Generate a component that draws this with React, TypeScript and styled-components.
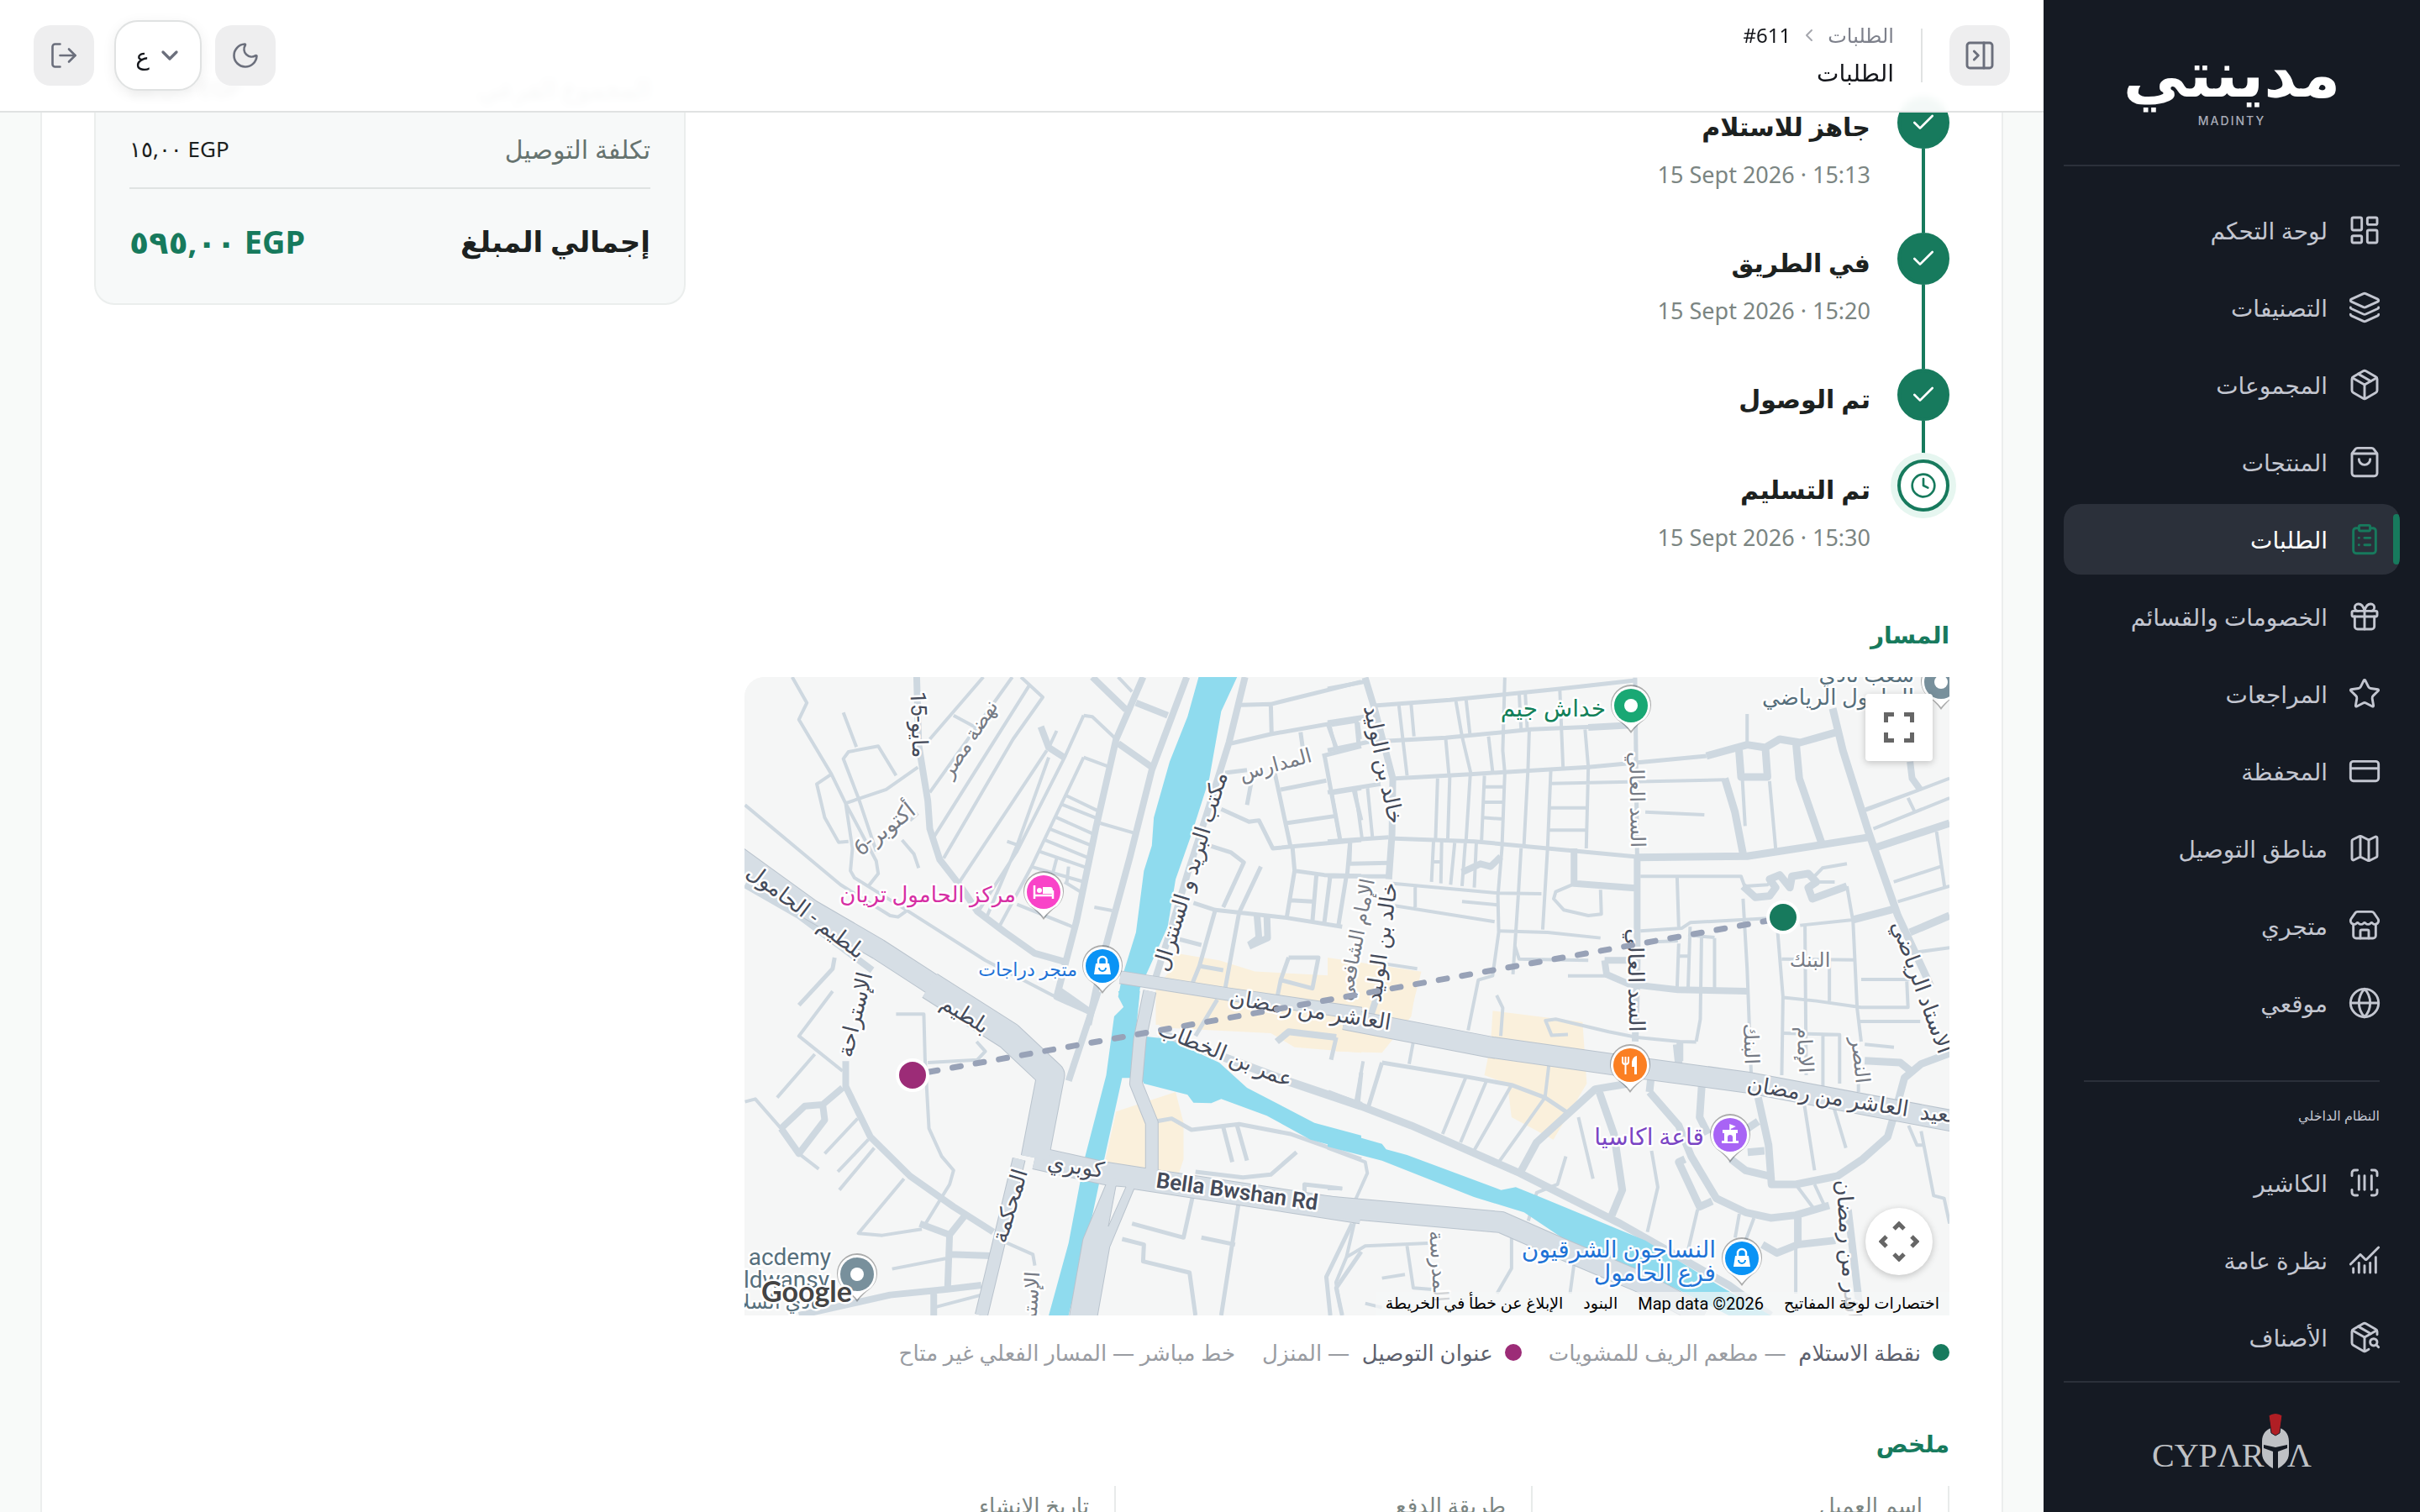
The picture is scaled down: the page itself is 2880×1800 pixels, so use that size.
import React from "react";
import styled, { createGlobalStyle } from "styled-components";
import {
  ChartNoAxesCombined,
  Check,
  ChevronDown,
  ChevronLeft,
  ClipboardList,
  Clock,
  CreditCard,
  Gift,
  Globe,
  Layers,
  LayoutDashboard,
  LogOut,
  Map as MapIcon,
  Moon,
  Package,
  PackageSearch,
  PanelRightClose,
  ScanBarcode,
  ShoppingBag,
  Star,
  Store,
} from "lucide-react";

const green = "#177a5d";
const magenta = "#9c2c77";

const GlobalStyle = createGlobalStyle`
  *, *::before, *::after { box-sizing: border-box; }
  body {
    margin: 0;
    background: #f8faf9;
    color: #1c2120;
    font-family: "Noto Sans", "DejaVu Sans", sans-serif;
    font-size: 28px;
  }
  button, select { font: inherit; color: inherit; cursor: pointer; }
  h1, h2, p, ul, ol, dl, dt, dd { margin: 0; padding: 0; }
  ul, ol { list-style: none; }
  a { color: inherit; text-decoration: none; }
`;

/* ---------- shell ---------- */

const Shell = styled.div`
  display: flex;
  height: 100vh;
  overflow: hidden;
`;

const Sidebar = styled.aside`
  flex: 0 0 448px;
  display: flex;
  flex-direction: column;
  padding: 0 24px;
  background: #151a23;
  color: #c3c6d0;
`;

const Brand = styled.div`
  display: flex;
  flex-direction: column;
  align-items: center;
  height: 198px;
  padding-top: 36px;
  border-bottom: 2px solid #2b303a;
`;

const BrandName = styled.span`
  font-size: 76px;
  font-weight: 700;
  line-height: 100px;
  color: #fff;
`;

const BrandLatin = styled.span`
  font-family: Inter, sans-serif;
  font-size: 14px;
  font-weight: 500;
  line-height: 16px;
  letter-spacing: 2px;
  color: #a9adb8;
`;

const Nav = styled.nav`
  flex: 1;
  min-height: 0;
  overflow: hidden;
  padding-top: 34px;
`;

const NavList = styled.ul`
  display: flex;
  flex-direction: column;
  gap: 8px;
`;

const NavLink = styled.a<{ $active?: boolean }>`
  position: relative;
  display: flex;
  align-items: center;
  gap: 24px;
  height: 84px;
  padding: 0 22px;
  border-radius: 20px;
  overflow: hidden;
  font-size: 28px;
  background: ${(p) => (p.$active ? "#2b303a" : "transparent")};
  color: ${(p) => (p.$active ? "#fff" : "#c3c6d0")};
  svg { color: ${(p) => (p.$active ? green : "inherit")}; flex: none; }
  &::before {
    content: "";
    display: ${(p) => (p.$active ? "block" : "none")};
    position: absolute;
    inset: 12px 0 12px auto;
    width: 8px;
    border-radius: 4px;
    background: ${green};
  }
`;

const NavGroupLabel = styled.p`
  margin: 50px 24px 26px;
  padding-top: 28px;
  border-top: 2px solid #2b303a;
  font-size: 16px;
  line-height: 24px;
`;

const SidebarFooter = styled.footer`
  display: flex;
  justify-content: center;
  height: 156px;
  padding-top: 36px;
  border-top: 2px solid #2b303a;
`;

/* ---------- top bar ---------- */

const Content = styled.div`
  flex: 1;
  min-width: 0;
  overflow: hidden;
`;

const TopBar = styled.header`
  position: sticky;
  top: 0;
  z-index: 2;
  display: flex;
  align-items: center;
  justify-content: space-between;
  height: 134px;
  padding: 0 40px;
  border-bottom: 2px solid #e0e2e2;
  background: rgba(255, 255, 255, 0.95);
  backdrop-filter: blur(4px);
`;

const BarStart = styled.div`
  display: flex;
  align-items: center;
  gap: 32px;
`;

const BarEnd = styled.div`
  display: flex;
  align-items: center;
  gap: 16px;
`;

const IconButton = styled.button`
  display: grid;
  place-items: center;
  width: 72px;
  height: 72px;
  padding: 0;
  border: 0;
  border-radius: 20px;
  background: #eeeeef;
  color: #6b6f7c;
`;

const BarRule = styled.span`
  width: 2px;
  height: 64px;
  background: #e0e2e2;
`;

const PageTitles = styled.div`
  display: flex;
  flex-direction: column;
`;

const Crumbs = styled.nav`
  display: flex;
  align-items: center;
  gap: 10px;
  font-size: 24px;
  line-height: 40px;
  color: #7d808b;
  svg { color: #a5a7ae; }
`;

const CrumbCurrent = styled.span`
  color: #14161b;
`;

const PageTitle = styled.h1`
  font-size: 28px;
  font-weight: 500;
  line-height: 48px;
  color: #14161b;
`;

const LanguageBox = styled.label`
  position: relative;
  width: 104px;
  height: 84px;
  margin-left: 8px;
  color: #6b6f7c;
  svg {
    position: absolute;
    inset: 26px 22px auto auto;
    pointer-events: none;
  }
`;

const LanguageSelect = styled.select`
  appearance: none;
  width: 100%;
  height: 100%;
  padding: 0 60px 0 20px;
  border: 2px solid #e0e2e2;
  border-radius: 28px;
  background: #fff;
  box-shadow: 0 4px 16px rgba(0, 0, 0, 0.07);
  color: #14161b;
  font-size: 28px;
`;

/* ---------- order card ---------- */

const OrderCard = styled.main`
  display: grid;
  grid-template-columns: minmax(0, 1fr) 704px;
  gap: 70px;
  align-items: start;
  margin: -19px 48px 0;
  padding: 0 62px;
  border: solid #eceeee;
  border-width: 0 2px;
  background: #fff;
`;

const Timeline = styled.ol`
  display: flex;
  flex-direction: column;
`;

const Step = styled.li`
  display: flex;
  gap: 32px;
`;

const Rail = styled.div`
  display: flex;
  flex-direction: column;
  align-items: center;
`;

const Dot = styled.span<{ $current?: boolean }>`
  display: grid;
  place-items: center;
  width: 62px;
  height: 62px;
  border: 4px solid ${green};
  border-radius: 50%;
  background: ${(p) => (p.$current ? "#fff" : green)};
  color: ${(p) => (p.$current ? green : "#fff")};
  box-shadow: ${(p) => (p.$current ? "0 0 0 8px #e6f6f0" : "none")};
`;

const RailLine = styled.span`
  flex: 1;
  width: 4px;
  background: ${green};
`;

const StepText = styled.div<{ $last?: boolean }>`
  padding: 8px 0 ${(p) => (p.$last ? "0" : "44px")};
`;

const StepTitle = styled.p`
  font-size: 30px;
  font-weight: 700;
  line-height: 56px;
`;

const StepTime = styled.p`
  margin-top: 4px;
  font-size: 27px;
  line-height: 50px;
  color: #7b8582;
`;

const SectionTitle = styled.h2`
  margin-top: 66px;
  margin-bottom: 27px;
  font-size: 28px;
  font-weight: 700;
  line-height: 48px;
  color: ${green};
`;

const Legend = styled.ul`
  display: flex;
  gap: 32px;
  margin-top: 26px;
  font-size: 26px;
  line-height: 36px;
  color: #999ca2;
`;

const LegendItem = styled.li`
  display: flex;
  align-items: center;
  gap: 14px;
  b { margin-left: 8px; font-weight: 400; color: #5d616e; }
`;

const LegendDot = styled.span<{ $tone: string }>`
  width: 20px;
  height: 20px;
  border-radius: 50%;
  background: ${(p) => p.$tone};
`;

const Summary = styled.dl`
  display: grid;
  grid-template-columns: repeat(3, minmax(0, 1fr));
  gap: 54px;
`;

const SummaryCell = styled.div`
  padding-right: 30px;
  border-right: 2px solid #e8ebea;
  font-size: 26px;
  line-height: 46px;
  dt { color: #7b8582; }
`;

const Totals = styled.aside`
  margin-top: -46px;
  padding: 0 40px 24px;
  border: 2px solid #ebeeed;
  border-top: 0;
  border-radius: 0 0 24px 24px;
  background: #f7f9f9;
`;

const TotalRow = styled.div<{ $grand?: boolean }>`
  display: flex;
  align-items: center;
  justify-content: space-between;
  height: ${(p) => (p.$grand ? "100px" : "72px")};
  margin-top: ${(p) => (p.$grand ? "12px" : "0")};
  font-weight: ${(p) => (p.$grand ? 700 : 400)};
`;

const TotalBlock = styled.div`
  margin-top: 10px;
  border-top: 2px solid #dfe3e2;
`;

const TotalLabel = styled.span<{ $strong?: boolean }>`
  font-size: ${(p) => (p.$strong ? "34px" : "30px")};
  color: ${(p) => (p.$strong ? "#1c2120" : "#66736f")};
`;

const Amount = styled.span<{ $accent?: boolean }>`
  direction: ltr;
  unicode-bidi: bidi-override;
  font-size: ${(p) => (p.$accent ? "38px" : "26px")};
  color: ${(p) => (p.$accent ? green : "#1c2120")};
`;

/* ---------- map ---------- */

const MapFrame = styled.div`
  position: relative;
  height: 760px;
  overflow: hidden;
  border-radius: 24px 0 0 0;
  background: #f5f6f6;
`;

const MapCanvas = styled.svg`
  display: block;
  width: 100%;
  height: 100%;
  direction: ltr;
  font-family: Roboto, "Noto Sans", "DejaVu Sans", sans-serif;
  text { paint-order: stroke; stroke: #fff; stroke-width: 5px; stroke-linejoin: round; }
`;

const MapButton = styled.button<{ $round?: boolean }>`
  position: absolute;
  right: 20px;
  ${(p) => (p.$round ? "bottom: 48px;" : "top: 20px;")}
  display: grid;
  place-items: center;
  width: 80px;
  height: 80px;
  padding: 0;
  border: 0;
  border-radius: ${(p) => (p.$round ? "50%" : "4px")};
  background: #fff;
  box-shadow: 0 2px 8px rgba(0, 0, 0, 0.22);
`;

const Attribution = styled.div`
  position: absolute;
  bottom: 0;
  right: 0;
  display: flex;
  gap: 24px;
  padding: 0 12px;
  background: rgba(245, 246, 246, 0.72);
  color: #000;
  font-family: Roboto, "Noto Sans", "DejaVu Sans", sans-serif;
  font-size: 19px;
  line-height: 28px;
  button { padding: 0; border: 0; background: none; }
`;

const MapCredit = styled.span`
  font-size: 20px;
`;

type Road = [number, string];

// Each sheet of the map is digitised on its own grid and placed by its transform.
const sheets: {
  place: string;
  blocks: string[];
  water: string[];
  roads: Road[];
  major: Road[];
}[] = [
  {
    place: "translate(880 720) scale(.4719 .3333)",
    blocks: ["M1080 1240L1210 1270L1300 1310L1568 1330V1500H1050V1370L1090 1300Z"],
    water: [
      "M1158 258L1130 400L1085 560L1045 760L1040 860L1020 950L1000 1170L965 1330L955 1400L970 1440L945 1500H1000L1010 1370L1045 1260L1080 1150L1100 980L1140 820L1185 620L1215 380L1255 258Z",
    ],
    roads: [
      [4, "M133 258L170 350L150 410L232 605L268 710L345 915L350 960L325 1005M232 605L195 640L215 760L250 848L275 845M262 385L295 508M395 610L350 505L275 525L262 550L300 690L345 880M265 710L370 660L450 580M268 710L285 870L280 950L290 975L415 1085L620 1270L790 1395L880 1450M14 715L255 1000L380 1110L400 1115L420 1095M410 840L440 890L452 940M615 258L480 480M540 395L605 445M688 258L480 670M730 290L490 830M710 258L765 330L690 480L515 905M775 520L555 990M780 545L700 860L625 1110M820 545L700 880L600 1100M800 450L780 510M868 395L820 545M868 395L890 400L950 480M868 545L935 580M868 545L735 940L655 1150M675 845L705 860M700 1070L840 1150M450 745L430 770"],
      [4, "M822 680L910 740M812 712L905 765M797 758L895 820M782 800L888 860M770 840L882 905M755 880L878 940M735 935L870 990M800 905L790 960M830 935L825 1000M895 1080L940 1092M910 780L995 815M955 258L990 310M820 990L860 1025"],
      [8, "M760 435L780 510L822 548M447 258L452 500L475 700L480 800L505 910L560 1010L600 1095L670 1170L745 1245L820 1275M890 258L975 375M1018 258L950 480L900 790L850 1130L800 1400L880 1450M1128 258L1040 590L985 900L920 1240L880 1500M1000 350L1080 395M955 495L1040 580M1275 258L1235 490L1180 740L1130 960L1090 1150L1050 1330M1305 1105L1310 1190L1285 1215M1330 1105L1332 1190L1285 1220M14 1000L150 1110L335 1305"],
      [5, "M1568 275L1340 355L1265 358M1568 405L1340 462L1240 495M1340 355L1342 460M1485 430L1505 510M1415 455L1420 505M1555 400L1562 505M1568 505L1470 540M1225 600L1280 590M1350 600L1390 865M1475 535L1515 840M1365 660L1480 628M1378 780L1500 755M1215 730L1285 775L1310 770L1345 870L1568 840M1495 672L1568 655M1550 665L1568 770M1290 640L1280 715M1185 860L1240 885L1272 920L1220 1080M1315 935L1260 1100L1225 1370M1145 1065L1200 1090L1380 1118L1520 1150M1395 870L1400 950L1380 1118M1540 850L1538 930M1400 950L1475 965L1568 968M1455 965L1445 1130M1490 968L1475 1135M1530 975L1510 1150M1390 1055L1445 1060M1200 1090L1160 1290L1140 1360M1110 1195L1165 1215M1160 1290L1220 1305M1385 1260H1460L1445 1370L1365 1340L1385 1260M1365 1340L1355 1410M240 1260L235 1300L150 1430"],
    ],
    major: [
      [14, "M960 1330L1230 1390L1568 1460"],
      [24, "M-10 895L180 1090L350 1230L470 1340L640 1500"],
    ],
  },
  {
    place: "translate(1580 780) scale(.4847 .3333)",
    blocks: ["M0 1080L230 1130L200 1300L0 1270Z"],
    water: [],
    roads: [
      [5, "M0 120L90 95M115 180L300 160L570 120L755 90M0 240L90 220M0 340L100 310L290 295L500 265L745 250M165 440L350 425L640 400L800 378L930 360M165 655L360 665L540 690L760 720M0 490L130 460M0 665L150 650M0 790H150M55 745L150 742M55 670L48 785"],
      [4, "M435 80L430 340L435 420L428 690L418 860L420 990L405 1145L370 1160L345 1340M175 180L195 430M205 175L212 290M315 165L330 290L352 425M340 160L350 290M290 300L298 430M395 290L405 415M470 130L475 265M485 130L490 260M570 120L578 400M495 270L492 405L482 680M632 265L640 400L635 690M548 410L540 690L528 980M548 458L975 445M548 545H635M545 625H635M385 470H430M385 525H430M380 580L430 585M385 430L378 660M270 440L265 655M300 430L295 655M350 430L340 660M260 665L255 810M280 665L278 815M312 670L302 820M338 670L330 825M365 670L360 830M260 738H278"],
      [4, "M160 815L420 850L525 852M215 825V900M165 895L410 952M330 880L418 892M475 690L468 860L455 1140M420 985L540 990L670 1010M460 1040L470 1085L640 1090M600 820L560 845L555 870L580 910L640 930L672 925L670 838M1030 210V320M1018 435L1025 610M1085 450L1100 690M780 560L925 570M10 250L75 235M5 250L20 340M75 240L80 300M68 480L85 660M98 475L110 650M10 490L30 660M130 1100L220 1120"],
      [8, "M92 80L115 190L160 440L158 640L150 800M130 1180L105 1290M640 258L745 250M330 775L375 745L400 755L425 720M605 690V815L755 832M760 720V1100L755 1380M680 1090H735M680 1090L685 1140L740 1175L860 1195L1030 1200M865 1380V1450M1430 380L1435 440L1455 480"],
      [5, "M755 80L760 720"],
      [9, "M930 360L1030 320L1075 330L1110 300L1160 312L1250 275M760 722L1030 718L1200 680L1330 650M975 440L1000 560L1020 710M1010 340L1015 435H1080L1075 335M1150 315L1158 440L1215 680M1240 190L1265 340L1330 640L1400 930L1480 1180M1527 600L1350 685M1527 930L1430 990M1290 945L1395 905M1020 825L1050 865L1085 860L1100 830L1085 800L1110 785L1135 830L1140 790L1180 780L1200 810L1180 830L1190 870L1275 825"],
      [4, "M1455 480L1320 550M1527 440L1320 555M1527 510L1340 620M1425 510L1440 555M1495 630L1515 830M1505 755L1390 810M1527 825L1400 880M1527 1045L1450 1060M768 790H980L1015 790L1025 830M858 790L862 970M768 985L870 975L890 955L1080 940M1290 945L1160 965M1025 825L1080 820L1110 785M1195 790L1215 760L1275 745M1200 810L1245 810M1275 825L1290 950L1300 1260L1310 1380M1020 870L1030 1120L1040 1500M1105 990L1118 1220L1115 1500M1172 965L1175 1500M1115 1085L1295 1088M1232 1090V1235M1115 1222L1200 1235L1310 1258H1425L1422 1165M1310 1158H1435M1305 1308H1455M590 1145H690M858 1075H885M862 1030L858 1190M890 970L885 1190M918 1005L915 1300L905 1380M950 1010V1190M885 1000L950 1008M780 1025L860 1020M590 1355L550 1358L535 1305L560 1300L690 1345L760 1365L865 1380L905 1382M415 1215L430 1260L425 1360"],
    ],
    major: [],
  },
  {
    place: "translate(880 1180) scale(.4719 .3333)",
    blocks: [
      "M1050 0H1568V220L1400 200L1340 150L1060 130Z",
      "M950 430L1100 360L1120 470V600L1090 730L1050 650L920 620Z",
    ],
    water: [
      "M955 0L970 55L945 90L925 300L870 600L830 900L780 1158H830L890 800L920 600L965 310H990L1000 140L1010 0Z",
      "M1010 160L1080 170L1210 255L1280 345L1450 470L1568 515V580L1440 530L1330 445L1215 385L1190 400L1145 398L1130 370L1020 330L1010 300Z",
    ],
    roads: [
      [4, "M235 0L150 160L260 285M190 225L95 380M14 395L40 385L105 490L150 580L200 635M298 455L215 580M325 530L248 645M340 560L252 710M415 670L300 865L360 872L460 850M395 82H465L468 240L478 490L510 590L540 640L530 690L465 840M598 180L620 215L600 245L475 255M385 992L520 955M660 890L740 940L745 980M490 1130L610 1085"],
      [8, "M268 250V340L330 520L430 660L540 770L640 860M105 490L165 410L210 405L215 460L150 580L105 490M260 345L210 405M455 830L530 870L525 1060M575 790L530 870M530 940L635 945M150 1158L380 1085L520 1065L610 1050M490 1080V1158M905 0L830 320M800 -10L885 75M1355 180L1385 145L1505 165"],
      [5, "M1050 465L1090 455L1140 495L1260 475L1390 510L1568 600M1220 485L1243 610M1255 480L1280 605M1150 645L1270 665L1340 655L1405 575M1425 720V690L1520 705M1145 720L1120 880L990 830M1165 880L1250 905M1265 700L1215 1158M965 885L1020 905L1018 965L1135 1005L1150 1158M1545 830L1480 1020L1490 1158M1568 930L1505 1060L1520 1158M1205 30L1150 160M1505 165L1492 245M1568 290L1560 400"],
      [10, "M1060 150L1380 320L1568 410"],
    ],
    major: [
      [14, "M1035 0L1010 170L1000 330L1040 470V640M705 600L610 1158"],
      [26, "M745 595L920 650L1050 678L1568 790"],
      [32, "M480 -20L680 160L785 300L745 595M965 680L900 900L865 1180"],
    ],
  },
  {
    place: "translate(1580 1180) scale(.4974 .3333)",
    blocks: [
      "M0 0H210L200 90L130 220L20 215Z",
      "M395 70L610 110L620 330L540 530L440 450L430 330L375 300L390 190Z",
    ],
    water: [
      "M0 490L130 545L140 565L190 585L415 710L450 700L500 730L760 890L935 1050L1060 1158H960L830 1060L700 980L560 880L470 790L350 735L130 605L0 555Z",
    ],
    roads: [
      [4, "M205 180L195 260M85 250L68 390M330 310L275 510M380 320L318 540M440 335L350 570M530 255L520 380L405 620M600 450L635 670M775 570L790 700L765 860M1140 400L1165 640M1210 410L1240 560M1390 480L1410 550H1430M1420 500L1450 730L1475 740L1488 830M1120 690L1165 780M1165 690L1190 770M885 780L860 940M985 795L975 880M1020 810L1000 890M1120 910V1080M570 590L550 690L500 720L480 820M0 560L90 610L95 650L65 750M0 705H35M65 820L45 950L20 1040L30 1130M45 950L90 910L240 900M130 1025L185 1012M190 910L205 1060L250 1065M90 1115L130 1130M440 880V990L405 1080M590 970L580 1080M590 970L780 1060M1090 150L1225 155V330M1185 155V340M1285 190L1355 200M1270 310V360"],
      [5, "M130 255L98 410M130 255L330 305L440 335L520 380L580 440"],
      [9, "M0 365L200 480L460 650L700 830L960 1050L1060 1158M460 650L500 540L640 350L720 330M650 360L685 510L705 710L680 800M770 360L840 480L870 590L930 740L1000 790L1060 810L1120 800L1200 765M775 290L770 360M895 340L890 450L910 510M1030 380L1055 550L1062 690H1120L1220 660L1280 600L1340 520L1360 420L1380 310L1420 260L1500 215M855 600L840 610L890 770L920 750M1030 465L1005 490M1045 570L1005 575M965 600L1000 640L1055 660M1125 800V900M1040 905L1075 935L1125 905L1215 890M1245 780L1275 1158M1285 248L1370 255L1395 285M835 190L840 260"],
    ],
    major: [
      [24, "M40 100L390 200L700 265L1000 325L1500 465"],
      [24, "M-10 768L415 825L560 920L750 1040L900 1160"],
    ],
  },
];

const road = "#ced8e0";
const dark = "#454b5a";
const soft = "#767b85";

// x, y, angle, text, size, colour
const streetNames: [number, number, number, string, number, string][] = [
  [1085, 863, 88, "15-مايو", 26, dark],
  [1160, 884, -57, "نهضة مصر", 24, soft],
  [1058, 994, -38, "6-أكتوبر", 26, soft],
  [1520, 918, -15, "المدارس", 24, soft],
  [1425, 1040, -73, "مكتب البريد و السنترال", 26, dark],
  [1638, 912, 78, "خالد بن الوليد", 26, dark],
  [1653, 1123, -82, "خالد بن الوليد", 26, dark],
  [1622, 1120, -79, "الإمام الشافعي", 24, soft],
  [1940, 952, 89, "السد العالي", 24, soft],
  [1938, 1167, 89, "السد العالي", 26, dark],
  [2154, 1151, 0, "البنك", 24, soft],
  [2076, 1243, 88, "البنك", 24, soft],
  [2140, 1250, 87, "الإمام", 24, soft],
  [2206, 1263, 84, "النصر", 24, soft],
  [2279, 1178, 70, "الاستاد الرياضي", 26, dark],
  [1558, 1211, 9, "العاشر من رمضان", 26, dark],
  [2174, 1314, 9, "العاشر من رمضان", 26, dark],
  [2312, 1335, 5, "سعيد", 26, dark],
  [954, 1092, 37, "بلطيم - الحامول", 26, dark],
  [1144, 1215, 32, "بلطيم", 26, dark],
  [1026, 1210, -76, "الإستراحة", 26, dark],
  [1210, 1438, -73, "المحكمة", 26, dark],
  [1234, 1562, -86, "الإستراحة", 24, soft],
  [1279, 1397, 9, "كوبري", 26, dark],
  [1455, 1263, 22, "عمر بن الخطاب", 26, dark],
  [1704, 1508, 86, "المدرسة", 24, soft],
  [2192, 1502, 86, "العاشر من رمضان", 26, dark],
];

// right edge x, baseline y, text, size, colour
const placeNames: [number, number, string, number, string][] = [
  [1209, 1074, "مركز الحامول تريان", 26, "#d62fa4"],
  [1282, 1162, "متجر دراجات", 22, "#1f73d6"],
  [1911, 853, "خداش جيم", 28, "#128059"],
  [2278, 812, "شعب نادي", 26, "#566f7c"],
  [2278, 839, "الحامول الرياضي", 26, "#566f7c"],
  [2028, 1363, "قاعة اكاسيا", 28, "#7a45c4"],
  [2042, 1497, "النساجون الشرقيون", 28, "#1f73d6"],
  [2042, 1525, "فرع الحامول", 28, "#1f73d6"],
  [989, 1506, "acdemy", 28, "#566f7c"],
  [987, 1533, "ldwansy", 28, "#566f7c"],
  [978, 1558, "نادي السلاكوي", 24, "#566f7c"],
];

function Pin({ x, y, tone, children }: { x: number; y: number; tone: string; children: React.ReactNode }) {
  return (
    <g transform={`translate(${x} ${y})`}>
      <path d="M0 33C-5 26-10 21-16 17A24 24 0 1 1 16 17C10 21 5 26 0 33Z" fill="#000" opacity=".3" />
      <path d="M0 30C-5 24-10 20-16 16.500A23 23 0 1 1 16 16.500C10 20 5 24 0 30Z" fill="#fff" />
      <circle r="20" fill={tone} />
      {children}
    </g>
  );
}

const bag = (
  <>
    <path d="M-8-3H8L10 10H-10Z" fill="#fff" />
    <path d="M-5-3V-6A5 5 0 0 1 5-6V-3" fill="none" stroke="#fff" strokeWidth="2.500" />
    <path d="M-4 2A4 4 0 0 0 4 2" fill="none" stroke="#0a93f5" strokeWidth="2" />
  </>
);

function RouteMap() {
  return (
    <MapFrame>
      <MapCanvas viewBox="886 806 1434 760" preserveAspectRatio="xMidYMid slice" role="img" aria-label="المسار">
        <rect x="0" y="600" width="4000" height="1200" fill="#f5f6f6" />
        {sheets.map((s, i) => (
          <g key={i} transform={s.place}>
            {s.blocks.map((d) => <path key={d} d={d} fill="#faf0dc" />)}
          </g>
        ))}
        {sheets.map((s, i) => (
          <g key={i} transform={s.place} fill="none" stroke={road} strokeLinejoin="round">
            {s.roads.map(([w, d]) => <path key={d} d={d} strokeWidth={w} vectorEffect="non-scaling-stroke" />)}
          </g>
        ))}
        {sheets.map((s, i) => (
          <g key={i} transform={s.place} fill="#8fdbee">
            {s.water.map((d) => <path key={d} d={d} />)}
          </g>
        ))}
        {sheets.map((s, i) => (
          <g key={i} transform={s.place} fill="none" stroke="#b9c3cd" strokeLinejoin="round">
            {s.major.map(([w, d]) => <path key={d} d={d} strokeWidth={w + 2} vectorEffect="non-scaling-stroke" />)}
          </g>
        ))}
        {sheets.map((s, i) => (
          <g key={i} transform={s.place} fill="none" stroke="#d6dee5" strokeLinejoin="round">
            {s.major.map(([w, d]) => <path key={d} d={d} strokeWidth={w} vectorEffect="non-scaling-stroke" />)}
          </g>
        ))}
        <path d="M1328 1412L1340 1413L1319 1460Z" fill="#f5f6f6" stroke="#b9c3cd" />

        {streetNames.map(([x, y, a, name, size, tone], i) => (
          <text key={i} transform={`translate(${x} ${y}) rotate(${a})`} textAnchor="middle" fontSize={size} fill={tone}>
            {name}
          </text>
        ))}
        <text transform="translate(1471 1427) rotate(8)" textAnchor="middle" fontSize="26" fontWeight="600" fill={dark}>
          Bella Bwshan Rd
        </text>

        <path d="M1106 1276L2104 1096" stroke="#98a2b7" strokeWidth="7" strokeLinecap="round" strokeDasharray="10 18" />
        <circle cx="2122" cy="1092" r="18" fill={green} stroke="#fff" strokeWidth="4" />
        <circle cx="1086" cy="1280" r="18" fill={magenta} stroke="#fff" strokeWidth="4" />

        {placeNames.map(([x, y, name, size, tone]) => (
          <text key={name} x={x} y={y} textAnchor="end" fontSize={size} fill={tone}>{name}</text>
        ))}

        <Pin x={1242} y={1062} tone="#f943c8">
          <path d="M-11-8V8M-11 4H11M11 8V-2" stroke="#fff" strokeWidth="2.500" />
          <path d="M-1 2V-6H8Q11-6 11-2V2Z" fill="#fff" />
          <circle cx="-5" cy="-2" r="3" fill="#fff" />
        </Pin>
        <Pin x={1312} y={1150} tone="#0a93f5">{bag}</Pin>
        <Pin x={2073} y={1498} tone="#0a93f5">{bag}</Pin>
        <Pin x={1941} y={840} tone="#19a874"><circle r="8" fill="#fff" /></Pin>
        <Pin x={1020} y={1517} tone="#78909c"><circle r="8" fill="#fff" /></Pin>
        <Pin x={2310} y={812} tone="#78909c"><circle r="8" fill="#fff" /></Pin>
        <Pin x={1940} y={1268} tone="#fb7f22">
          <path d="M-9-10V-4Q-9-1-5.500-1Q-2-1-2-4V-10M-5.500-10V11" fill="none" stroke="#fff" strokeWidth="2" />
          <path d="M8-11V11H5V2H2V-4Q3-10 8-11Z" fill="#fff" />
        </Pin>
        <Pin x={2059} y={1351} tone="#a864f5">
          <path d="M-9-6H9V-2H7V7H10V10H-10V7H-7V-2H-9Z" fill="#fff" />
          <path d="M0-6V-12L5-10L1-8" stroke="#fff" strokeWidth="1.500" fill="#fff" />
          <path d="M-3 8V3A3 3 0 0 1 3 3V8Z" fill="#a864f5" />
        </Pin>
        <text x="906" y="1550" fontFamily="Lato, sans-serif" fontSize="34" fontWeight="700" fill="#444">Google</text>
      </MapCanvas>
      <MapButton type="button" aria-label="ملء الشاشة">
        <svg width="36" height="36" viewBox="0 0 36 36" fill="none" stroke="#666" strokeWidth="5">
          <path d="M2.500 12V2.500H12M24 2.500H33.500V12M33.500 24V33.500H24M12 33.500H2.500V24" />
        </svg>
      </MapButton>
      <MapButton type="button" $round aria-label="عناصر التحكم بالخريطة">
        <svg width="48" height="48" viewBox="0 0 48 48" fill="none" stroke="#666" strokeWidth="5">
          <path d="M18 9L24 3L30 9M39 18L45 24L39 30M30 39L24 45L18 39M9 30L3 24L9 18" />
        </svg>
      </MapButton>
      <Attribution>
        <button type="button">اختصارات لوحة المفاتيح</button>
        <MapCredit dir="ltr">Map data ©2026</MapCredit>
        <a href="#terms">البنود</a>
        <a href="#report">الإبلاغ عن خطأ في الخريطة</a>
      </Attribution>
    </MapFrame>
  );
}

/* ---------- logos ---------- */

function CypartaLogo() {
  return (
    <svg width="190" height="70" viewBox="0 0 190 70" direction="ltr" role="img" aria-label="CYPARTA">
      <g fill="#bfc1c5" fontFamily="Liberation Serif, serif" fontSize="40">
        <text x="0" y="64">CYPΛR</text>
        <text x="161" y="64">Λ</text>
      </g>
      <path d="M147 17C136 18 131 25 131 34V48C131 57 138 63 144 66V46L133 42V38L147 41L161 38V42L150 46V66C156 63 163 57 163 48V34C163 25 158 18 147 17Z" fill="#bfc1c5" />
      <path d="M139 3Q147-2 155 3L152 24L147 27L142 24Z" fill="#b01e24" stroke="#151a23" />
    </svg>
  );
}

/* ---------- data ---------- */

const mainNav = [
  { label: "لوحة التحكم", Icon: LayoutDashboard },
  { label: "التصنيفات", Icon: Layers },
  { label: "المجموعات", Icon: Package },
  { label: "المنتجات", Icon: ShoppingBag },
  { label: "الطلبات", Icon: ClipboardList, active: true },
  { label: "الخصومات والقسائم", Icon: Gift },
  { label: "المراجعات", Icon: Star },
  { label: "المحفظة", Icon: CreditCard },
  { label: "مناطق التوصيل", Icon: MapIcon },
  { label: "متجري", Icon: Store },
  { label: "موقعي", Icon: Globe },
];

const innerNav = [
  { label: "الكاشير", Icon: ScanBarcode },
  { label: "نظرة عامة", Icon: ChartNoAxesCombined },
  { label: "الأصناف", Icon: PackageSearch },
];

const steps = [
  { title: "جاهز للاستلام", time: "15 Sept 2026 · 15:13" },
  { title: "في الطريق", time: "15 Sept 2026 · 15:20" },
  { title: "تم الوصول" },
  { title: "تم التسليم", time: "15 Sept 2026 · 15:30", current: true },
];

function NavItems({ items }: { items: { label: string; Icon: typeof Gift; active?: boolean }[] }) {
  return (
    <NavList>
      {items.map(({ label, Icon, active }) => (
        <li key={label}>
          <NavLink href="#" $active={active} aria-current={active ? "page" : undefined}>
            <Icon size={40} strokeWidth={1.75} />
            {label}
          </NavLink>
        </li>
      ))}
    </NavList>
  );
}

export default function App() {
  return (
    <Shell dir="rtl" lang="ar">
      <GlobalStyle />
      <Sidebar>
        <Brand>
          <BrandName>مدينتي</BrandName>
          <BrandLatin dir="ltr">MADINTY</BrandLatin>
        </Brand>
        <Nav>
          <NavItems items={mainNav} />
          <NavGroupLabel>النظام الداخلي</NavGroupLabel>
          <NavItems items={innerNav} />
        </Nav>
        <SidebarFooter>
          <CypartaLogo />
        </SidebarFooter>
      </Sidebar>

      <Content>
        <TopBar>
          <BarStart>
            <IconButton type="button" aria-label="طي القائمة">
              <PanelRightClose size={40} strokeWidth={1.75} />
            </IconButton>
            <BarRule />
            <PageTitles>
              <Crumbs>
                <a href="#">الطلبات</a>
                <ChevronLeft size={24} strokeWidth={2} />
                <CrumbCurrent dir="ltr">#611</CrumbCurrent>
              </Crumbs>
              <PageTitle>الطلبات</PageTitle>
            </PageTitles>
          </BarStart>
          <BarEnd>
            <IconButton type="button" aria-label="الوضع الداكن">
              <Moon size={36} strokeWidth={1.75} />
            </IconButton>
            <LanguageBox>
              <LanguageSelect aria-label="اللغة" defaultValue="ar">
                <option value="ar">ع</option>
                <option value="en">EN</option>
              </LanguageSelect>
              <ChevronDown size={32} strokeWidth={2.5} />
            </LanguageBox>
            <IconButton type="button" aria-label="تسجيل الخروج">
              <LogOut size={36} strokeWidth={1.75} />
            </IconButton>
          </BarEnd>
        </TopBar>

        <OrderCard>
          <section>
            <Timeline>
              {steps.map((s, i) => (
                <Step key={s.title}>
                  <Rail>
                    <Dot $current={s.current}>
                      {s.current ? <Clock size={32} strokeWidth={2} /> : <Check size={32} strokeWidth={2} />}
                    </Dot>
                    {i < steps.length - 1 && <RailLine />}
                  </Rail>
                  <StepText $last={i === steps.length - 1}>
                    <StepTitle>{s.title}</StepTitle>
                    {s.time && <StepTime dir="ltr">{s.time}</StepTime>}
                  </StepText>
                </Step>
              ))}
            </Timeline>

            <SectionTitle>المسار</SectionTitle>
            <RouteMap />
            <Legend>
              <LegendItem>
                <LegendDot $tone={green} />
                <span><b>نقطة الاستلام</b> — مطعم الريف للمشويات</span>
              </LegendItem>
              <LegendItem>
                <LegendDot $tone={magenta} />
                <span><b>عنوان التوصيل</b> — المنزل</span>
              </LegendItem>
              <li>خط مباشر — المسار الفعلي غير متاح</li>
            </Legend>

            <SectionTitle>ملخص</SectionTitle>
            <Summary>
              <SummaryCell><dt>اسم العميل</dt></SummaryCell>
              <SummaryCell><dt>طريقة الدفع</dt></SummaryCell>
              <SummaryCell><dt>تاريخ الانشاء</dt></SummaryCell>
            </Summary>
          </section>

          <Totals>
            <TotalRow>
              <TotalLabel>المجموع الفرعي</TotalLabel>
              <Amount>٥٨٠,٠٠ EGP</Amount>
            </TotalRow>
            <TotalRow>
              <TotalLabel>تكلفة التوصيل</TotalLabel>
              <Amount>١٥,٠٠ EGP</Amount>
            </TotalRow>
            <TotalBlock>
              <TotalRow $grand>
                <TotalLabel $strong>إجمالي المبلغ</TotalLabel>
                <Amount $accent>٥٩٥,٠٠ EGP</Amount>
              </TotalRow>
            </TotalBlock>
          </Totals>
        </OrderCard>
      </Content>
    </Shell>
  );
}
